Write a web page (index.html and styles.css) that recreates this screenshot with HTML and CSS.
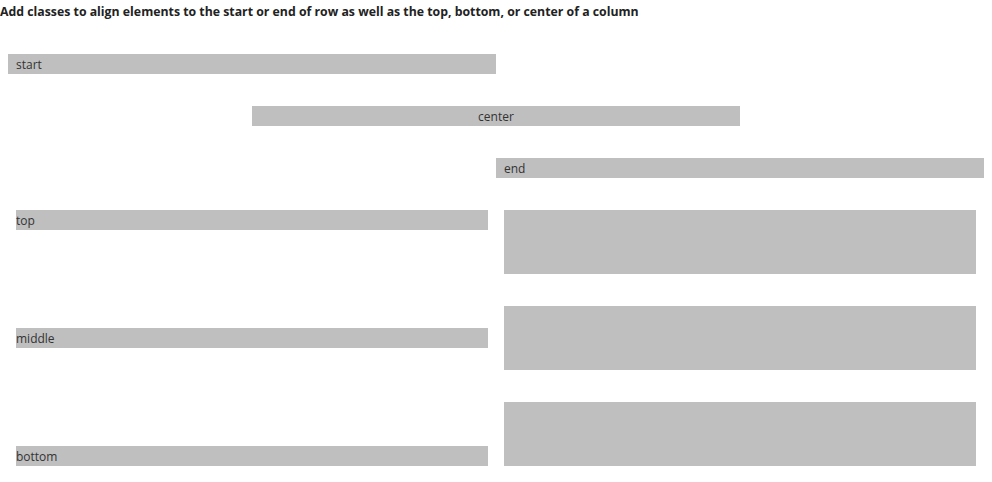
FILE: index.html
```html
<!DOCTYPE html>
<html>
<head>
<meta charset="utf-8">
<link rel="stylesheet" href="styles.css">
</head>
<body>
<div class="title">Add classes to align elements to the start or end of row as well as the top, bottom, or center of a column</div>
<div class="wrap">
  <div class="hrow"><div class="bar">start</div></div>
  <div class="hrow hcenter"><div class="bar text-center">center</div></div>
  <div class="hrow hend"><div class="bar">end</div></div>
  <div class="vrow vtop">
    <div class="col"><div class="cell">top</div></div>
    <div class="col"><div class="box"></div></div>
  </div>
  <div class="vrow vmiddle">
    <div class="col"><div class="cell">middle</div></div>
    <div class="col"><div class="box"></div></div>
  </div>
  <div class="vrow vbottom">
    <div class="col"><div class="cell">bottom</div></div>
    <div class="col"><div class="box"></div></div>
  </div>
</div>
</body>
</html>
```
FILE: styles.css
```css
html, body {
  margin: 0;
  padding: 0;
  background: #fff;
}
body {
  font-family: "Open Sans", "Noto Sans", sans-serif;
  font-size: 12px;
  color: #333;
}
.title {
  font-weight: bold;
  font-size: 12.3px;
  color: #222;
  box-sizing: border-box;
  padding-top: 1px;
  line-height: 22px;
  height: 22px;
}
.wrap {
  margin: 32px 8px 16px;
  display: flex;
  flex-direction: column;
  gap: 32px;
}
.hrow {
  display: flex;
}
.hcenter { justify-content: center; }
.hend { justify-content: flex-end; }
.bar {
  width: 50%;
  box-sizing: border-box;
  height: 20px;
  line-height: 20px;
  padding: 1px 8px 0;
  background: #bfbfbf;
}
.text-center { text-align: center; }
.vrow {
  display: flex;
  height: 64px;
}
.col {
  width: 50%;
  box-sizing: border-box;
  padding: 0 8px;
  display: flex;
  flex-direction: column;
}
.vmiddle .col:first-child { justify-content: center; }
.vbottom .col:first-child { justify-content: flex-end; }
.cell {
  box-sizing: border-box;
  height: 20px;
  line-height: 20px;
  padding-top: 1px;
  background: #bfbfbf;
}
.box {
  height: 64px;
  background: #bfbfbf;
}
```
